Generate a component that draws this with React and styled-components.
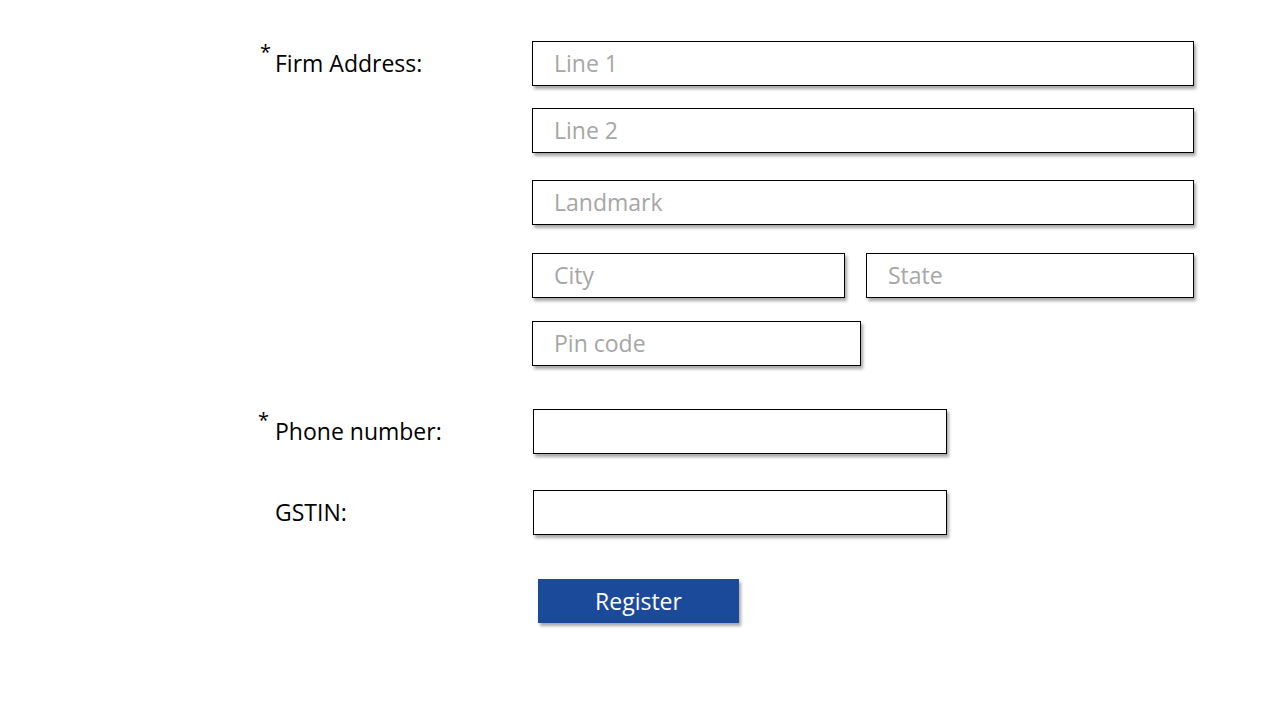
import React from "react";
import styled, { createGlobalStyle } from "styled-components";

const Global = createGlobalStyle`
  html, body { margin: 0; padding: 0; background: #ffffff; }
  body { font-family: "Open Sans", "Liberation Sans", sans-serif; color: #000; }
`;

const Page = styled.div`
  width: 1280px;
  height: 720px;
  box-sizing: border-box;
  padding: 41px 0 0 258px;
`;

const Form = styled.form`
  display: flex;
  flex-direction: column;
  width: 936px;
`;

const Row = styled.div`
  display: grid;
  grid-template-columns: 274px 1fr;
  align-items: start;
  margin-top: ${(p) => p.$mt || 0}px;
`;

const Label = styled.div`
  display: flex;
  align-items: center;
  height: 44px;
  font-size: 23px;
  white-space: nowrap;
`;

const Star = styled.span`
  width: 17px;
  flex: none;
  font-size: 20px;
  align-self: flex-start;
  margin-top: ${(p) => p.$top || 0}px;
  margin-left: ${(p) => p.$left || 0}px;
  margin-right: ${(p) => p.$right || 0}px;
  line-height: 1;
`;

const Fields = styled.div`
  display: flex;
  flex-direction: column;
  padding-left: ${(p) => p.$pl || 0}px;
`;

const Line = styled.div`
  display: flex;
  gap: 21px;
  margin-top: ${(p) => p.$mt || 0}px;
`;

const Box = styled.div`
  box-sizing: border-box;
  width: ${(p) => p.$w}px;
  height: 45px;
  border: 1.3px solid #000;
  background: #fff;
  box-shadow: 2px 3px 3px rgba(0, 0, 0, 0.35);
  display: flex;
  align-items: center;
  padding: 0 0 2px 21px;
  font-size: 23px;
  color: #a6a6a6;
`;

const Button = styled.button`
  box-sizing: border-box;
  width: 201px;
  height: 44px;
  margin-left: 6px;
  border: none;
  background: #1c4a9b;
  color: #fff;
  font-family: inherit;
  font-size: 23px;
  box-shadow: 2px 3px 3px rgba(0, 0, 0, 0.35);
  padding: 0;
`;

export default function App() {
  return (
    <>
      <Global />
      <Page>
        <Form onSubmit={(e) => e.preventDefault()}>
          <Row>
            <Label>
              <Star $top={1} $left={2} $right={-2}>*</Star>Firm Address:
            </Label>
            <Fields>
              <Box $w={662}>Line 1</Box>
              <Line $mt={22}><Box $w={662}>Line 2</Box></Line>
              <Line $mt={27}><Box $w={662}>Landmark</Box></Line>
              <Line $mt={28}>
                <Box $w={313}>City</Box>
                <Box $w={328}>State</Box>
              </Line>
              <Line $mt={23}><Box $w={329}>Pin code</Box></Line>
            </Fields>
          </Row>
          <Row $mt={43}>
            <Label>
              <Star $top={1}>*</Star>Phone number:
            </Label>
            <Fields $pl={1}>
              <Box $w={414} />
            </Fields>
          </Row>
          <Row $mt={36}>
            <Label>
              <Star />GSTIN:
            </Label>
            <Fields $pl={1}>
              <Box $w={414} />
            </Fields>
          </Row>
          <Row $mt={44}>
            <div />
            <Fields>
              <Button type="submit">Register</Button>
            </Fields>
          </Row>
        </Form>
      </Page>
    </>
  );
}
